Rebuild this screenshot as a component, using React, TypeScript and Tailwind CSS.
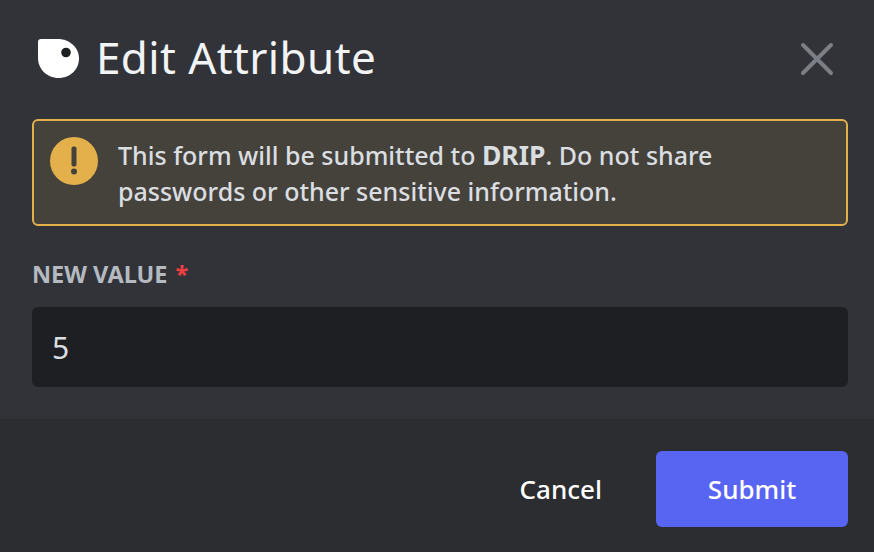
import React from 'react';

export default function App() {
  return (
    <div className="w-[874px] h-[552px] flex flex-col overflow-hidden bg-[#313338] font-['Noto_Sans',sans-serif]">
      {/* Header */}
      <div className="h-[119px] shrink-0 flex items-start justify-between pl-[37px] pr-[40px] pt-[32px]">
        <div className="flex items-center gap-[16px]">
          <svg width="43" height="40" viewBox="0 0 43 40" className="shrink-0 mt-[1px]">
            <path d="M1 4a3 3 0 0 1 3-3h17c11.500 0 21 8.500 21 19.500S33 40 21.500 40C10 40 1 31 1 20z" fill="#ffffff" />
            <circle cx="29" cy="14.500" r="4.800" fill="#1e1f22" />
          </svg>
          <h1 className="text-[44px] leading-[50px] tracking-[0.4px] text-[#f2f3f5]">Edit Attribute</h1>
        </div>
        <button className="mt-[10px] text-[#7b7e85]">
          <svg width="34" height="34" viewBox="0 0 34 34" fill="none" stroke="currentColor" strokeWidth="4" strokeLinecap="round">
            <path d="M3 3l28 28M31 3L3 31" />
          </svg>
        </button>
      </div>

      {/* Body */}
      <div className="flex-1 pl-[32px] pr-[26px]">
        <div className="h-[107px] flex items-start gap-[20px] rounded-[6px] border-2 border-[#e3b04b] bg-[#45423c] px-[16px] pt-[16px]">
          <svg width="48" height="48" viewBox="0 0 48 48" className="shrink-0">
            <circle cx="24" cy="24" r="24" fill="#e3b04b" />
            <rect x="21.500" y="9.500" width="5" height="20" rx="2" fill="#45423c" />
            <circle cx="24" cy="34.500" r="3" fill="#45423c" />
          </svg>
          <p className="text-[25px] leading-[36px] font-medium text-[#dbdee1]">
            This form will be submitted to <strong className="text-[26.5px] font-bold">DRIP</strong>. Do not share passwords or other sensitive information.
          </p>
        </div>

        <div className="mt-[33px] h-[32px] flex items-center text-[23.5px] font-bold text-[#b5bac1]">
          NEW VALUE<span className="ml-[8px] text-[#f23f42]">*</span>
        </div>
        <div className="mt-[16px] h-[80px] flex items-center rounded-[6px] bg-[#1e1f22] px-[20px] text-[30px] text-[#dbdee1]">
          5
        </div>
      </div>

      {/* Footer */}
      <div className="h-[133px] shrink-0 flex items-start justify-end gap-[54px] bg-[#2b2d31] pt-[32px] pr-[26px]">
        <button className="h-[76px] text-[26px] font-medium text-white">Cancel</button>
        <button className="h-[76px] w-[192px] rounded-[6px] bg-[#5865f2] text-[26px] font-medium text-white">Submit</button>
      </div>
    </div>
  );
}
